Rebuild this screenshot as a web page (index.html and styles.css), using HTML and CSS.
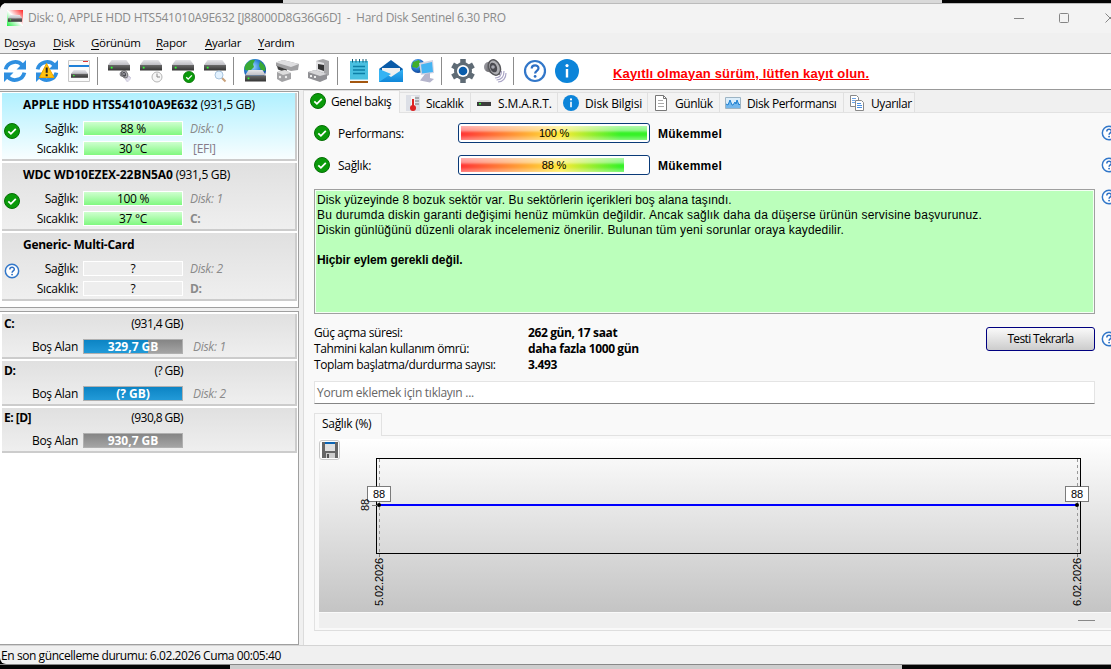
FILE: index.html
```html
<!DOCTYPE html>
<html lang="tr">
<head>
  <meta charset="UTF-8">
  <title>Hard Disk Sentinel 6.30 PRO</title>
  <link rel="stylesheet" href="styles.css">
</head>
<body>

  <!-- shared icons -->
  <svg class="defs" width="0" height="0">
    <defs>
      <linearGradient id="g-top" x1="0" y1="0" x2="0" y2="1"><stop offset="0" stop-color="#e6e6ea"/><stop offset="1" stop-color="#bcbcc2"/></linearGradient>
      <linearGradient id="g-front" x1="0" y1="0" x2="0" y2="1"><stop offset="0" stop-color="#6a6a6a"/><stop offset="1" stop-color="#333"/></linearGradient>
      <linearGradient id="g-blue" x1="0" y1="0" x2="0" y2="1"><stop offset="0" stop-color="#36b4f5"/><stop offset="1" stop-color="#0f86d8"/></linearGradient>
      <radialGradient id="g-globe" cx=".4" cy=".35" r=".7"><stop offset="0" stop-color="#9fd8ff"/><stop offset=".5" stop-color="#2a7fd6"/><stop offset="1" stop-color="#0b3d91"/></radialGradient>
      <linearGradient id="g-logo" x1="1" y1="0" x2="0" y2="1"><stop offset="0" stop-color="#f22"/><stop offset=".5" stop-color="#fff"/><stop offset="1" stop-color="#2e4"/></linearGradient>
      <linearGradient id="g-chart" x1="0" y1="0" x2="0" y2="1"><stop offset="0" stop-color="#fff"/><stop offset="1" stop-color="#c4c4c4"/></linearGradient>
    </defs>
    <symbol id="ok" viewBox="0 0 16 16">
      <circle cx="8" cy="8" r="7.5" fill="#0a9a0a" stroke="#067006"/>
      <path d="M4.3 8.3l2.6 2.5 4.9-5" fill="none" stroke="#fff" stroke-width="1.8"/>
    </symbol>
    <symbol id="help" viewBox="0 0 24 24">
      <circle cx="12" cy="12" r="10" fill="#fff" stroke="#3277c9" stroke-width="2.2"/>
      <path d="M8.7 9.6c0-4.4 6.8-4.2 6.8-.3 0 2.5-3.4 2.7-3.4 5.2" fill="none" stroke="#2d6fc4" stroke-width="2.2"/>
      <circle cx="12.1" cy="17.4" r="1.4" fill="#2d6fc4"/>
    </symbol>
    <symbol id="info" viewBox="0 0 24 24">
      <circle cx="12" cy="12" r="12" fill="#0c84d9"/>
      <path d="M12 10v8.5" stroke="#fff" stroke-width="2.4"/>
      <circle cx="12" cy="6.6" r="1.6" fill="#fff"/>
    </symbol>
    <symbol id="drive" viewBox="0 0 24 13" preserveAspectRatio="none">
      <path d="M4 0h16l4 6H0z" fill="url(#g-top)"/>
      <path d="M0 6h24v6.500H0z" fill="url(#g-front)"/>
      <path d="M3 8h2v2H3z" fill="#3f3"/>
    </symbol>
    <symbol id="refresh" viewBox="0 0 24 24">
      <g fill="none" stroke="#2f8fe0" stroke-width="3.8">
        <path d="M2.6 10.4C4.4 2.6 14 .8 19 5.8"/>
        <path d="M21.4 13.6C19.6 21.4 10 23.2 5 18.2"/>
      </g>
      <path d="M23 1v9.5h-9.5zM1 23v-9.5h9.5z" fill="#2f8fe0"/>
    </symbol>
    <symbol id="speaker" viewBox="0 0 24 24">
      <ellipse cx="5.500" cy="8" rx="4.500" ry="5" fill="#8f8f96"/>
      <path d="M3 12L5 3l7-2 5 15-4 0z" fill="#77777b"/>
      <ellipse cx="11.500" cy="8.500" rx="5.600" ry="8" transform="rotate(-22 11.5 8.5)" fill="#b0b0b4" stroke="#58585c" stroke-width="1.500"/>
      <ellipse cx="10.500" cy="8.500" rx="3.400" ry="5" transform="rotate(-22 10.5 8.5)" fill="#4a4a50"/>
      <circle cx="10" cy="8" r="1.800" fill="#a8a8b0"/>
      <path d="M12 19c4 0 6.500-2.500 6.500-7M13.500 21c5 0 7.500-3.500 7.500-9M15 23c5 0 8-4 8-9" fill="none" stroke="#aaa5c6" stroke-width="1.200"/>
    </symbol>
  </svg>

  <div class="backdrop top"><i class="dark"></i><i class="sheet"></i><i class="dark"></i></div>

  <div class="window">
    <div class="titlebar">
      <svg class="logo" width="16" height="16"><path d="M0 0h16v16H0z" fill="url(#g-logo)"/><use href="#drive" x="1" y="5" width="14" height="7"/></svg>
      <span class="title">Disk: 0, APPLE HDD HTS541010A9E632 [J88000D8G36G6D]&nbsp; -&nbsp; Hard Disk Sentinel 6.30 PRO</span>
      <svg class="caption-buttons" width="104" height="14" fill="none" stroke="#858585">
        <path d="M7 7.500h10"/><rect x="52.500" y="2.500" width="9" height="9" rx="1"/><path d="M98.500 2.500l9 9m0-9l-9 9"/>
      </svg>
    </div>

    <div class="menu">
      <span class="m1">D<u>o</u>sya</span><span class="m2"><u>D</u>isk</span><span class="m3"><u>G</u>örünüm</span><span class="m4"><u>R</u>apor</span><span class="m5"><u>A</u>yarlar</span><span class="m6"><u>Y</u>ardım</span>
    </div>

    <div class="toolbar">
      <svg class="tool"><use href="#refresh" width="24" height="24"/></svg>
      <svg class="tool"><use href="#refresh" width="24" height="24"/><path d="M11.500 4.500L19 18.500H4.500z" fill="#ffc20e" stroke="#f0a500" stroke-linejoin="round"/><path d="M11.700 8.500v5.300m0 1.400v2" stroke="#222" stroke-width="2"/></svg>
      <svg class="tool"><path d="M1.500 1.500h21v21h-21z" fill="#fafafa" stroke="#c8c8c8"/><path d="M2 7h20" stroke="#1d7fd8" stroke-width="2"/><path d="M16 2.500h5" stroke="#d33"/><use href="#drive" x="4" y="11" width="17" height="8"/></svg>
      <i class="sep"></i>
      <svg class="tool"><use href="#drive" x="1" y="1" width="22" height="11"/><use href="#speaker" x="12" y="11" width="12" height="12"/></svg>
      <svg class="tool"><use href="#drive" x="1" y="1" width="22" height="11"/><circle cx="18" cy="18" r="5" fill="#f6f6f6" stroke="#b5b5b5"/><path d="M18 14.500V18h3" fill="none" stroke="#888"/></svg>
      <svg class="tool"><use href="#drive" x="1" y="1" width="22" height="11"/><use href="#ok" x="12" y="12" width="12" height="12"/></svg>
      <svg class="tool"><use href="#drive" x="1" y="1" width="22" height="11"/><path d="M18.500 18.500l4 4" stroke="#c9a27c" stroke-width="2"/><circle cx="16" cy="16" r="4" fill="#e3f2ff" stroke="#a9c4dd"/></svg>
      <i class="sep"></i>
      <svg class="tool"><circle cx="12" cy="11" r="11" fill="url(#g-globe)"/><path d="M4 4c3-3 5-4 8-3l-2 4 1 3-4 4-5-1c-1-3 0-5 2-7zM17 2l4 4c1 2 2 4 1 6l-4-1-2-4z" fill="#39a935"/><use href="#drive" x="2" y="11" width="21" height="12"/></svg>
      <svg class="tool"><path d="M1 3.500L8 1l16 4-1 6-7 1-15-5z" fill="#a0a0a2"/><path d="M1 3.500L8 1l16 4-8 3z" fill="#dedee0"/><path d="M2 7l10 3.500-1 3-8-3z" fill="#3c3c3c"/><path d="M2 13l8-2 6 3v6l-9 3-5-3z" fill="#a2a2a4"/><path d="M2 13l8-2 6 3-8 2z" fill="#ddd"/><circle cx="5" cy="18" r="1.200" fill="#eee"/><circle cx="11" cy="18" r="1.200" fill="#eee"/></svg>
      <svg class="tool"><path d="M9 2l7-2 6 2v14l-6 3-7-4z" fill="#a6a6a8"/><path d="M9 2l8 2v14l-8-3z" fill="#e2e2e4"/><path d="M11 5l6 1v6l-6-2z" fill="#333"/><path d="M1 13l7-2 12 4v5l-7 3-12-4z" fill="#909094"/><path d="M1 13l7-2 12 4-7 2z" fill="#d6d6d8"/><path d="M4 16v2m4-1v2" stroke="#eee" stroke-width="2"/></svg>
      <i class="sep"></i>
      <svg class="tool"><path d="M3 2h18v19H3z" fill="#49c0e0"/><path d="M3 22h18v2H3z" fill="#a3560f"/><path d="M3 21h18" stroke="#e8f4f8"/><path d="M5.500 0v3.500M9 0v3.500M12.500 0v3.500M16 0v3.500M19 0v3.500" stroke="#125e78"/><path d="M6 7.500h12M6 11h12M6 14.500h12" stroke="#0e7fa6" stroke-width="1.500"/></svg>
      <svg class="tool"><path d="M0 10L12 1l12 9v13H0z" fill="#0a5ba8"/><path d="M3 9h18v9H3z" fill="#f0f0f0"/><path d="M0 10l12 8 12-8v13H0z" fill="url(#g-blue)"/><path d="M0 23l12-8-12-5z" fill="#35b3f3"/></svg>
      <svg class="tool"><circle cx="7" cy="7" r="7" fill="url(#g-globe)"/><path d="M2 3l6-2 2 4-4 4-5-1zM8 9l4 1-2 4z" fill="#3fae2a"/><path d="M8 4l14-3 1 13-13 2z" fill="#d4d4e4"/><path d="M10 5.500l11-2.500 1 10-11 1.500z" fill="#44b4f2"/><path d="M14 15l5-1v5l4 1-4 3.500-10-2z" fill="#b5b5cc"/></svg>
      <i class="sep"></i>
      <svg class="tool"><path d="M12 0v24M1.600 6l20.800 12M22.400 6L1.600 18" stroke="#5f6b75" stroke-width="5.500"/><circle cx="12" cy="12" r="9" fill="#5f6b75"/><circle cx="12" cy="12" r="6" fill="#fff"/><circle cx="12" cy="12" r="4.300" fill="#0a5dab"/></svg>
      <svg class="tool"><use href="#speaker" width="24" height="24"/></svg>
      <i class="sep"></i>
      <svg class="tool"><use href="#help" width="24" height="24"/></svg>
      <svg class="tool"><use href="#info" width="24" height="24"/></svg>
      <a class="register">Kayıtlı olmayan sürüm, lütfen kayıt olun.</a>
    </div>

    <div class="main">
      <div class="side">
        <div class="disks">
          <div class="disk selected">
            <div class="name"><b>APPLE HDD HTS541010A9E632</b> (931,5 GB)</div>
            <svg class="state"><use href="#ok"/></svg>
            <div class="row"><span class="label">Sağlık:</span><span class="bar good">88 %</span><i class="note">Disk: 0</i></div>
            <div class="row"><span class="label">Sıcaklık:</span><span class="bar good">30 °C</span><span class="note efi">[EFI]</span></div>
          </div>
          <div class="disk">
            <div class="name"><b>WDC WD10EZEX-22BN5A0</b> (931,5 GB)</div>
            <svg class="state"><use href="#ok"/></svg>
            <div class="row"><span class="label">Sağlık:</span><span class="bar good">100 %</span><i class="note">Disk: 1</i></div>
            <div class="row"><span class="label">Sıcaklık:</span><span class="bar good">37 °C</span><b class="note">C:</b></div>
          </div>
          <div class="disk">
            <div class="name card"><b>Generic- Multi-Card</b></div>
            <svg class="state"><use href="#help"/></svg>
            <div class="row"><span class="label">Sağlık:</span><span class="bar">?</span><i class="note">Disk: 2</i></div>
            <div class="row"><span class="label">Sıcaklık:</span><span class="bar">?</span><b class="note">D:</b></div>
          </div>
        </div>
        <div class="volumes">
          <div class="volume">
            <div class="head"><b>C:</b><span>(931,4 GB)</span></div>
            <div class="row"><span class="label">Boş Alan</span><span class="space"><i style="width:65%"></i><b>329,7 GB</b></span><i class="note">Disk: 1</i></div>
          </div>
          <div class="volume">
            <div class="head"><b>D:</b><span>(? GB)</span></div>
            <div class="row"><span class="label">Boş Alan</span><span class="space"><i style="width:100%"></i><b>(? GB)</b></span><i class="note">Disk: 2</i></div>
          </div>
          <div class="volume">
            <div class="head"><b>E: [D]</b><span>(930,8 GB)</span></div>
            <div class="row"><span class="label">Boş Alan</span><span class="space"><b>930,7 GB</b></span></div>
          </div>
        </div>
      </div>

      <div class="content">
        <div class="tabs">
          <div class="tab t1 active"><svg width="16" height="16"><use href="#ok"/></svg><span>Genel bakış</span></div>
          <div class="tab t2"><svg width="16" height="16"><path d="M1 0h14v16H1z" fill="#dcdfe6"/><path d="M10 3h4m-4 3h4m-4 3h4" stroke="#777"/><path d="M8 1v10" stroke="#f4f4f4" stroke-width="4"/><path d="M8 4v8" stroke="#d22" stroke-width="2"/><circle cx="8" cy="13" r="3" fill="#d22"/></svg><span>Sıcaklık</span></div>
          <div class="tab t3"><svg width="16" height="16"><path d="M3 5h10l2 2H1z" fill="#ddd"/><path d="M1 7h14v4H1z" fill="#3c3c3c"/><path d="M3 8h2v1.500H3z" fill="#3e3"/></svg><span>S.M.A.R.T.</span></div>
          <div class="tab t4"><svg width="16" height="16"><use href="#info"/></svg><span>Disk Bilgisi</span></div>
          <div class="tab t5"><svg width="16" height="16"><path d="M2.500.500h8l3 3v12h-11z" fill="#fff" stroke="#777"/><path d="M10.500.500v3h3" fill="none" stroke="#777"/><path d="M5 5.500h5M5 8.500h6M5 11.500h6" stroke="#aaa"/></svg><span>Günlük</span></div>
          <div class="tab t6"><svg width="16" height="16"><path d="M.500 2.500h15v11H.500z" fill="#dceefb" stroke="#9db4c4"/><path d="M1 13V9l2 1 2-5 2 5 1 0 2-3 1 2 1-4 2 5 1-1v4z" fill="#74b7ec"/><path d="M1 9l2 1 2-5 2 5h1l2-3 1 2 1-4 2 5 1-1" fill="none" stroke="#1c7fd0"/></svg><span>Disk Performansı</span></div>
          <div class="tab t7"><svg width="16" height="16"><path d="M1.500.500h6l2 2v9h-8z" fill="#fff" stroke="#888"/><path d="M3 3.500h4M3 5.500h3M3 7.500h3" stroke="#6fa5e8"/><path d="M6.500 5.500h6l2 2v8h-8z" fill="#fff" stroke="#888"/><path d="M8 8.500h4M8 10.500h5M8 12.500h5" stroke="#4a90e2"/></svg><span>Uyarılar</span></div>
        </div>

        <div class="page">
          <div class="rating"><svg width="16" height="16"><use href="#ok"/></svg><span class="label">Performans:</span><span class="meter"><i style="width:100%"></i><em>100 %</em></span><b>Mükemmel</b><svg class="hint"><use href="#help"/></svg></div>
          <div class="rating"><svg width="16" height="16"><use href="#ok"/></svg><span class="label">Sağlık:</span><span class="meter"><i style="width:87.500%"></i><em>88 %</em></span><b>Mükemmel</b><svg class="hint"><use href="#help"/></svg></div>

          <div class="report">
            <div class="summary">
              <p class="l1">Disk yüzeyinde 8 bozuk sektör var. Bu sektörlerin içerikleri boş alana taşındı.</p>
              <p class="l2">Bu durumda diskin garanti değişimi henüz mümkün değildir. Ancak sağlık daha da düşerse ürünün servisine başvurunuz.</p>
              <p class="l3">Diskin günlüğünü düzenli olarak incelemeniz önerilir. Bulunan tüm yeni sorunlar oraya kaydedilir.</p>
              <p><b>Hiçbir eylem gerekli değil.</b></p>
            </div>
            <svg class="hint"><use href="#help"/></svg>
          </div>

          <div class="stats">
            <dl>
              <dt>Güç açma süresi:</dt><dd>262 gün, 17 saat</dd>
              <dt>Tahmini kalan kullanım ömrü:</dt><dd>daha fazla 1000 gün</dd>
              <dt>Toplam başlatma/durdurma sayısı:</dt><dd>3.493</dd>
            </dl>
            <button class="retest">Testi Tekrarla</button>
            <svg class="hint"><use href="#help"/></svg>
          </div>

          <div class="comment">Yorum eklemek için tıklayın ...</div>

          <div class="chart-tab"><span>Sağlık (%)</span></div>
          <div class="chart-box">
            <svg class="chart" width="800" height="173">
              <path d="M0 0h800v173H0z" fill="url(#g-chart)"/>
              <rect x=".500" y="1.500" width="20" height="19" rx="2.500" fill="#fdfdfd" stroke="#c8c8c8"/>
              <path d="M3 3h16v16H3z" fill="#666"/><path d="M6 3h10v2H6z" fill="#0a64b4"/><path d="M6 5h10v7H6z" fill="#e0e0e0"/><path d="M7 14h9v5H7z" fill="#ccc"/><path d="M8 15h2v4H8z" fill="#555"/>
              <rect x="57.500" y="19.500" width="704" height="95" fill="none" stroke="#000"/>
              <path d="M60.500 20v94M758.500 20v94" stroke="#999" stroke-dasharray="3 3"/>
              <path d="M60.500 115v3M758.500 115v3M53 66.500h5" stroke="#777"/>
              <path d="M59 66h699" stroke="#00f" stroke-width="2"/>
              <circle cx="60" cy="66" r="2"/><circle cx="758" cy="66" r="2"/>
              <rect x="48.500" y="47.500" width="23" height="15" fill="#fff" stroke="#000" stroke-dasharray="1 1"/>
              <rect x="746.500" y="47.500" width="23" height="15" fill="#fff" stroke="#000" stroke-dasharray="1 1"/>
              <text x="54" y="59">88</text><text x="752" y="59">88</text>
              <text transform="translate(50 72) rotate(-90)">88</text>
              <text class="date" transform="translate(64 167) rotate(-90)">5.02.2026</text>
              <text class="date" transform="translate(762 167) rotate(-90)">6.02.2026</text>
            </svg>
            <div class="chart-foot"></div>
          </div>
        </div>
      </div>
    </div>

    <div class="status">En son güncelleme durumu: 6.02.2026 Cuma 00:05:40</div>
  </div>

  <div class="backdrop bottom"><i class="dark"></i><i class="sheet"></i><i class="dark"></i></div>

</body>
</html>
```
FILE: styles.css
```css
* {
  box-sizing: border-box;
  margin: 0;
  padding: 0;
}

body {
  width: 1111px;
  height: 669px;
  overflow: hidden;
  display: flex;
  flex-direction: column;
  background: #000;
  color: #000;
  font: 12px/16px "Open Sans", "Noto Sans", sans-serif;
  letter-spacing: -0.3px;
  white-space: nowrap;
}

svg { display: block; flex: none; }
.defs { position: absolute; }

/* desktop behind the window */
.backdrop { display: flex; flex: none; height: 3px; }
.backdrop .dark { background: #050505; }
.backdrop .sheet { background: #d9d9d9; }
.top .dark:first-child { width: 283px; }
.top .sheet { width: 659px; }
.top .dark:last-child { flex: 1; }
.bottom { height: 5px; border-top: 1px solid #888; }
.bottom .dark:first-child { width: 230px; }
.bottom .sheet { width: 672px; background: #cdcdcd; }
.bottom .dark:last-child { flex: 1; }

.window {
  height: 661px;
  display: flex;
  flex-direction: column;
  background: #f0f0f0;
  border-radius: 7px 0 0 6px;
  overflow: hidden;
}

.titlebar {
  height: 30px;
  display: flex;
  align-items: center;
  padding: 0 0 2px 7px;
  background: #f3f3f3;
  color: #8b8b8b;
  border-top: 1px solid #bbb;
}
.title { margin-left: 5px; letter-spacing: -0.26px; }
.caption-buttons { margin-left: auto; }

.menu { height: 20px; display: flex; line-height: 20px; font-size: 11.5px; }
.menu u { text-underline-offset: 2px; }
.m1 { margin-left: 4px; width: 49px; }
.m2 { width: 38px; }
.m3 { width: 65px; }
.m4 { width: 49px; }
.m5 { width: 53px; }

.toolbar {
  height: 37px;
  display: flex;
  align-items: center;
  gap: 8px;
  padding: 0 0 2px 3px;
  background: #fff;
  border-top: 1px solid #999;
  border-bottom: 1px solid #999;
}
.tool { width: 24px; height: 24px; }
.sep { width: 1px; height: 28px; margin: 0 1px 0 -2px; background: #8c8c8c; }
.register {
  margin: 5px 0 0 26px;
  color: #f00;
  font: bold 13px "Liberation Sans", Arial, sans-serif;
  letter-spacing: 0.17px;
  text-decoration: underline;
}

.main { height: 555px; display: flex; }

/* left column */
.side { width: 303px; padding-top: 1px; display: flex; flex-direction: column; }
.disks, .volumes {
  width: 299px;
  background: #fff;
  border: solid #a0a0a0;
  border-width: 1px 1px 1px 0;
}
.disks { height: 217px; padding: 1px 1px 0 2px; }
.volumes { flex: 1; margin-top: 3px; padding: 2px 1px 0 2px; }
.disk, .volume {
  background: linear-gradient(#e0e0e0, #efefef);
  border: solid #ccc;
  border-width: 0 2px 2px 0;
  margin-bottom: 2px;
}
.disk { position: relative; height: 68px; padding-top: 4px; }
.selected { background: linear-gradient(#b0f0ff, #f8feff); }
.name { padding-left: 21px; height: 21px; }
.name b { letter-spacing: -0.07px; }
.name.card b { letter-spacing: -0.28px; }
.state { position: absolute; left: 2px; top: 30px; width: 16px; height: 16px; }
.row { display: flex; height: 20px; align-items: center; }
.row .label { width: 76px; padding-top: 1px; text-align: right; }
.bar {
  width: 100px;
  height: 15px;
  margin-left: 5px;
  border: 1px solid #fff;
  background: #eee;
  line-height: 14px;
  text-align: center;
}
.good { background: linear-gradient(#cfffcf, #80f880); }
.note { margin-left: 7px; padding-top: 1px; color: #8a8a8a; }
.efi { margin-left: 10px; color: #857a88; }
b { letter-spacing: -0.5px; }

.volume { height: 45px; padding-top: 2px; }
.head { display: flex; justify-content: space-between; width: 181px; height: 20px; padding-left: 2px; }
.head span { letter-spacing: -0.55px; }
.volume .note { margin-left: 10px; }
.space {
  position: relative;
  width: 100px;
  height: 15px;
  margin-left: 5px;
  border: 1px solid #b0b0b0;
  background: linear-gradient(#858585, #a4a4a4);
  color: #fff;
  line-height: 13px;
  text-align: center;
}
.space i { position: absolute; left: 0; top: 0; height: 100%; background: linear-gradient(#0c84c4, #229ad8); }
.space b { position: relative; letter-spacing: 0; }

/* right column */
.content {
  width: 808px;
  display: flex;
  flex-direction: column;
  background: #f9f9f9;
  border-left: 1px solid #dcdcdc;
}
.tabs { height: 23px; display: flex; align-items: flex-end; background: #f0f0f0; border-bottom: 1px solid #e2e2e2; }
.tab {
  flex: none;
  height: 20px;
  display: flex;
  align-items: center;
  padding-left: 5px;
  background: #f3f3f3;
  border: solid #e0e0e0;
  border-width: 1px 1px 0 0;
}
.tab span { margin-left: 6px; padding-top: 2px; letter-spacing: -0.4px; }
.t1 { width: 96px; }
.t2 { width: 71px; }
.t3 { width: 87px; }
.t4 { width: 90px; }
.t5 { width: 72px; }
.t6 { width: 124px; }
.t7 { width: 71px; }
.tab.t2 span { margin-left: 5px; }
.tab.t3 span { letter-spacing: -0.1px; }
.tab.t4 span { letter-spacing: -0.15px; }
.tab.active { height: 23px; margin-bottom: -1px; background: #f9f9f9; padding: 0 0 3px 6px; }
.tab.active span { margin-left: 5px; }

.page { padding: 4px 0 0 10px; }
.rating { display: flex; align-items: center; height: 32px; }
.rating .label { width: 120px; margin-left: 8px; padding-top: 2px; }
.meter {
  position: relative;
  width: 192px;
  height: 20px;
  padding: 2px;
  background: #fff;
  border: 1px solid #0a3a78;
  border-radius: 3px;
}
.meter i {
  display: block;
  height: 14px;
  background:
    linear-gradient(rgba(255,255,255,.65), rgba(255,255,255,.5) 30%, rgba(255,255,255,.1) 50%, rgba(255,255,255,.1) 65%, rgba(255,255,255,.45)),
    linear-gradient(90deg, #ff2020, #ffe820 100px, #20f010 160px) 0 0 / 186px 14px no-repeat;
}
.meter em {
  position: absolute;
  inset: 0;
  font: 11px/18px "Liberation Sans", Arial, sans-serif;
  text-align: center;
  letter-spacing: -0.2px;
}
.rating b { margin: 2px 0 0 8px; font: bold 12px "Liberation Sans", Arial, sans-serif; letter-spacing: 0.25px; }
.hint { width: 16px; height: 16px; }
.rating .hint { margin-left: auto; margin-right: -6px; }

.report { display: flex; margin-top: 8px; }
.summary {
  flex: none;
  width: 781px;
  height: 125px;
  margin-right: 6px;
  padding: 3px 2px;
  background: #bbffbb;
  border: 1px solid #a0a0a0;
  box-shadow: inset 0 0 0 1px #f4fff4;
  font: 12px/15px "Liberation Sans", Arial, sans-serif;
}
.l1 { letter-spacing: 0.1px; }
.l2 { letter-spacing: 0.215px; }
.l3 { letter-spacing: 0.165px; }
.summary p:last-child { margin-top: 15px; }
.summary b { letter-spacing: -0.1px; }

.stats { display: flex; margin-top: 11px; height: 56px; }
dl { flex: none; display: grid; grid-template-columns: 214px 458px; grid-auto-rows: 16px; }
dt { letter-spacing: -0.4px; }
dd { font-weight: bold; letter-spacing: -0.38px; }
.retest {
  flex: none;
  width: 109px;
  height: 24px;
  margin: 2px 6px 0 0;
  background: linear-gradient(#fafafa, #ccc);
  border: 1px solid #000080;
  border-radius: 3px;
  font: inherit;
  letter-spacing: -0.65px;
}
.stats .hint { margin-top: 6px; }

.comment {
  width: 781px;
  height: 23px;
  background: #fff;
  border: 1px solid #e4e4e4;
  border-bottom-color: #858585;
  padding: 2px;
  color: #666;
  line-height: 17px;
  letter-spacing: -0.26px;
}

.chart-tab { display: flex; height: 23px; margin-top: 9px; border-bottom: 1px solid #e2e2e2; }
.chart-tab span {
  width: 68px;
  height: 23px;
  padding: 2px 7px;
  border: 1px solid #e2e2e2;
  border-bottom: 0;
  background: #f9f9f9;
}
.chart-box { height: 195px; padding: 3px 0 0 4px; border-left: 1px solid #e2e2e2; border-bottom: 1px solid #dedede; }
.chart text { font: 11px "Liberation Sans", Arial, sans-serif; letter-spacing: 0; }
.chart .date { letter-spacing: -0.1px; }
.chart-foot {
  height: 15px;
  margin-top: 1px;
  background: linear-gradient(#888, #888) 759px 7px / 17px 1px no-repeat #efefef;
}

.status { height: 19px; padding-left: 1px; line-height: 20px; letter-spacing: -0.42px; border-top: 1px solid #d4d4d4; }
```
